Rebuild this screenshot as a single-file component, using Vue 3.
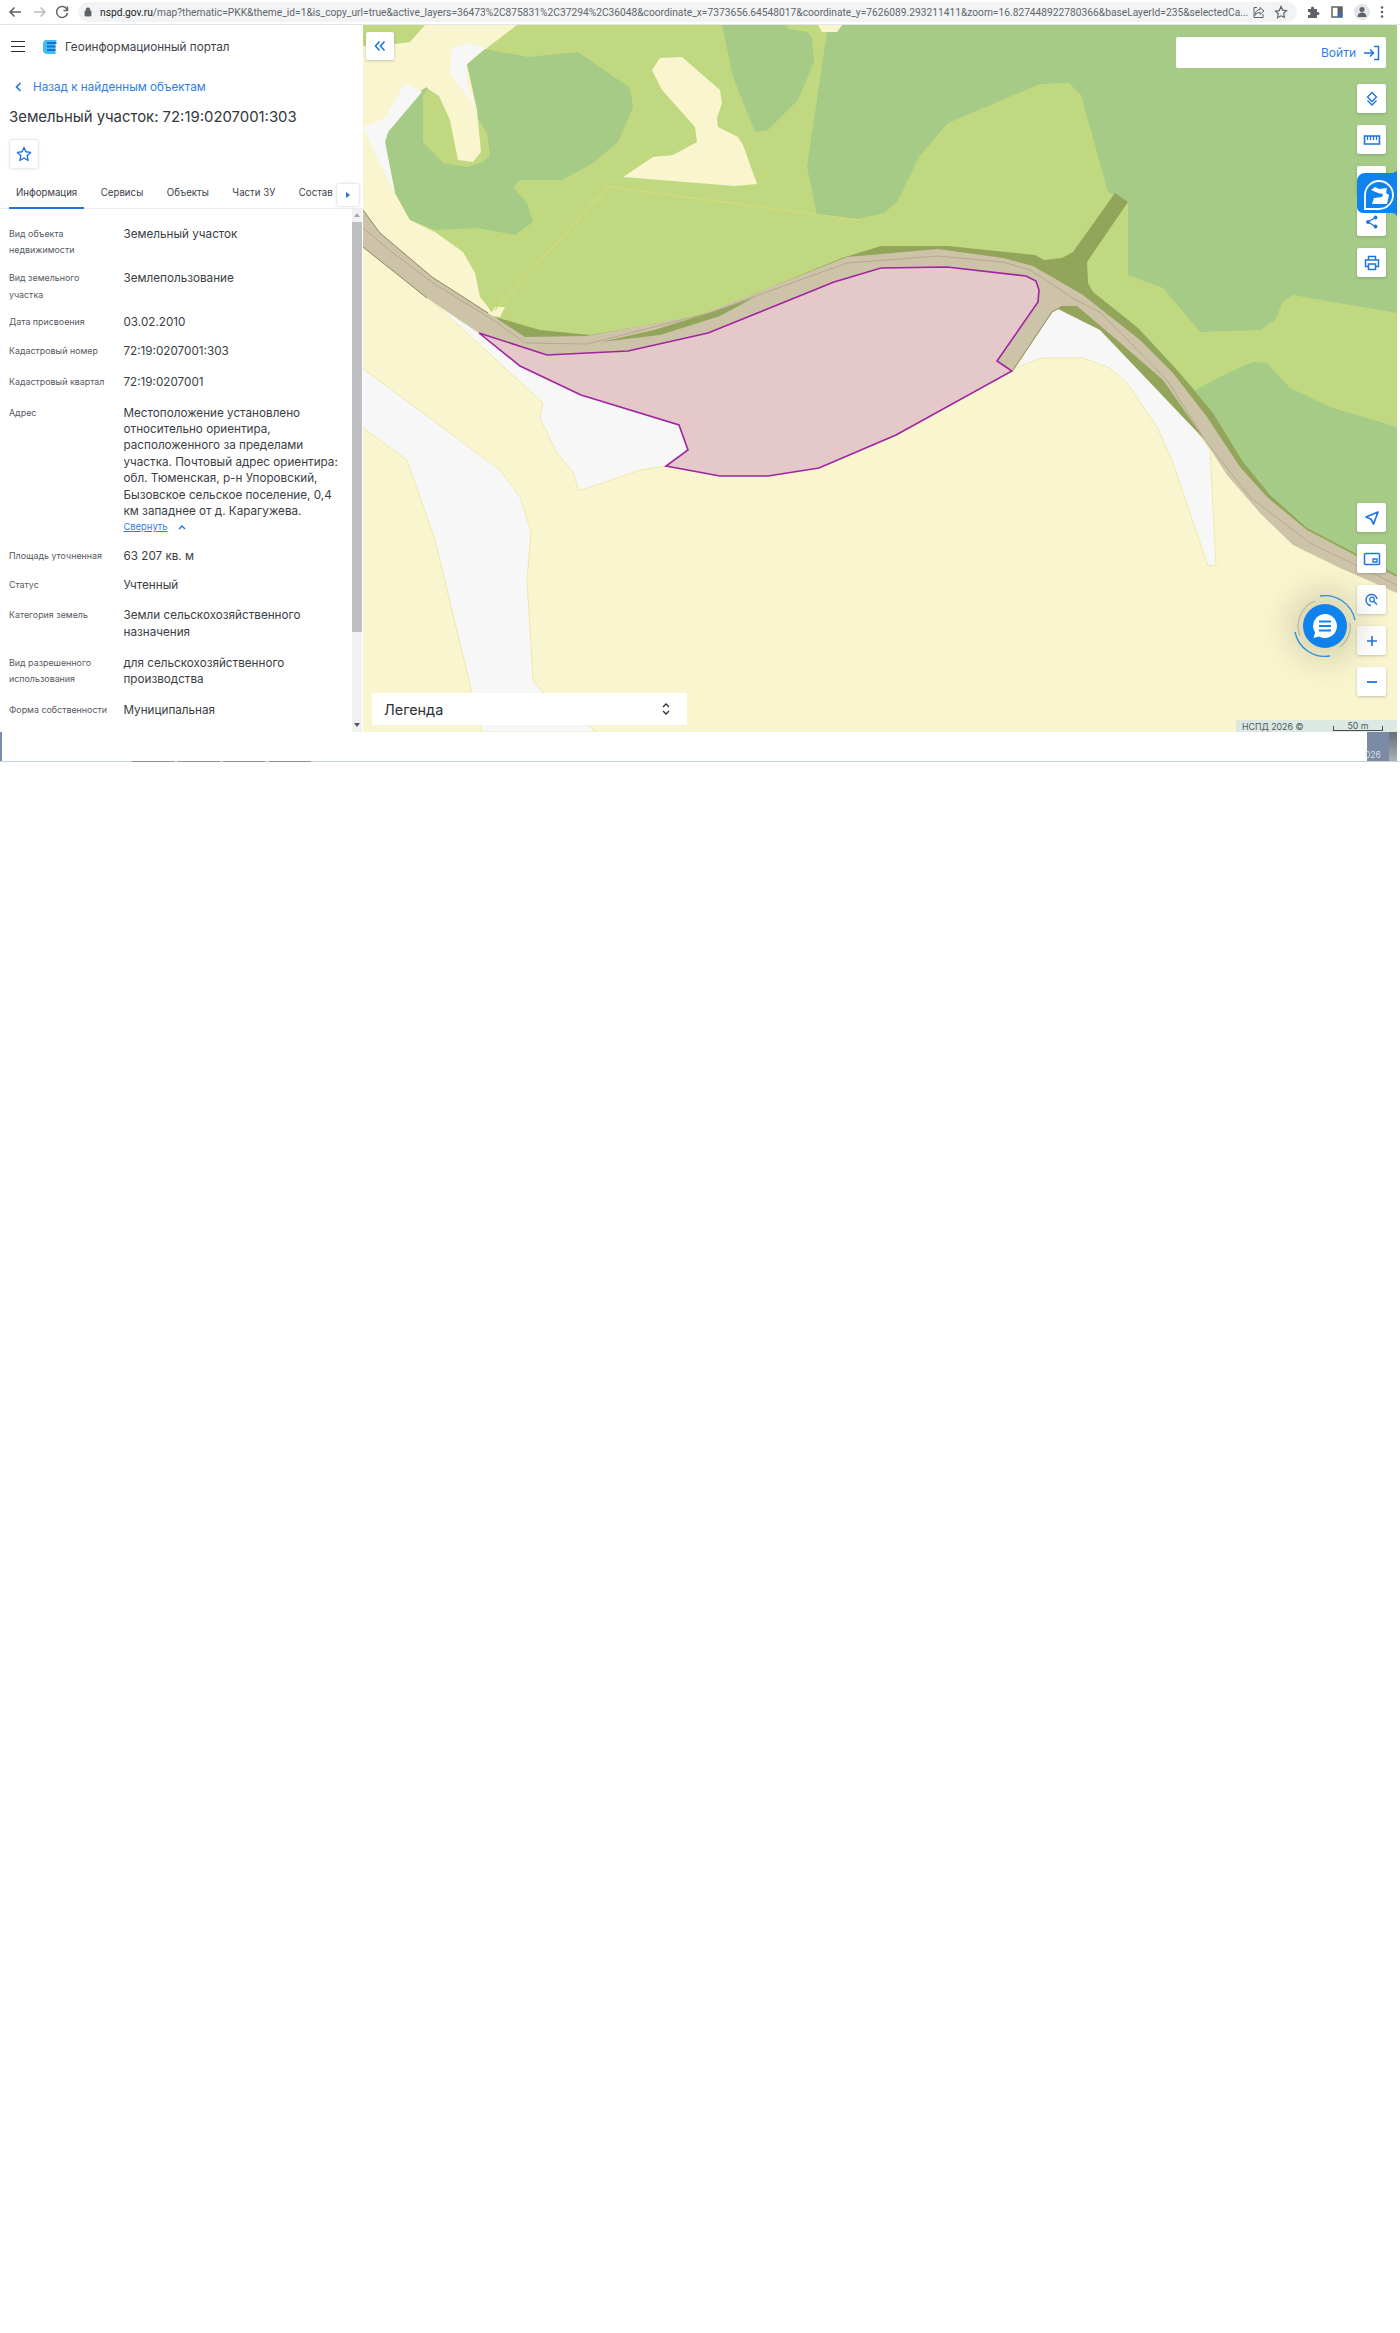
<script setup>
const url = 'map?thematic=PKK&theme_id=1&is_copy_url=true&active_layers=36473%2C875831%2C37294%2C36048&coordinate_x=7373656.64548017&coordinate_y=7626089.293211411&zoom=16.827448922780366&baseLayerId=235&selectedCa...'

const tabs = ['Информация', 'Сервисы', 'Объекты', 'Части ЗУ', 'Состав']

const rows = [
  { label: 'Вид объекта недвижимости', value: 'Земельный участок', pad: 'tall' },
  { label: 'Вид земельного участка', value: 'Землепользование', pad: 'tall' },
  { label: 'Дата присвоения', value: '03.02.2010' },
  { label: 'Кадастровый номер', value: '72:19:0207001:303', pad: 'loose' },
  { label: 'Кадастровый квартал', value: '72:19:0207001', pad: 'loose' },
  {
    label: 'Адрес',
    value: 'Местоположение установлено относительно ориентира, расположенного за пределами участка. Почтовый адрес ориентира: обл. Тюменская, р-н Упоровский, Бызовское сельское поселение, 0,4 км западнее от д. Карагужева.',
    more: true,
  },
  { label: 'Площадь уточненная', value: '63 207 кв. м' },
  { label: 'Статус', value: 'Учтенный', pad: 'loose' },
  { label: 'Категория земель', value: 'Земли сельскохозяйственного назначения', pad: 'wide' },
  { label: 'Вид разрешенного использования', value: 'для сельскохозяйственного производства', pad: 'wide' },
  { label: 'Форма собственности', value: 'Муниципальная' },
]

// map shapes, in page pixels (the svg viewBox starts at the map's corner)
const yellow = '#f9f5cf'
const white = '#f7f7f7'
const light = '#c0d880'
const dark = '#a6cb86'

const whites = [
  '427,298 479,333 520,366 581,395 679,425 688,450 666,466 640,470 579,491 573,472 557,453 540,418 543,403 431,300',
  '362,368 500,470 520,497 531,532 527,580 533,680 543,693 597,732 482,732 472,693 435,540 407,460 362,427',
  '1052,312 1063,306 1077,306 1117,340 1163,380 1210,450 1216,565 1208,566 1173,463 1157,427 1127,383 1110,368 1083,358 1042,358 1015,368',
]

const upperWhites = [
  '452,48 468,43 485,48 466,65 467,85 476,108 450,73',
  '405,83 422,92 388,132 385,142 395,193 383,170 363,127 385,118',
]

const fields = [
  { fill: dark, points: '780,25 1397,25 1397,583 1300,535 1240,470 1190,410 1140,350 1090,300 1000,270 780,270' },
  { fill: light, points: '517,25 828,25 807,167 817,215 857,219 884,213 897,202 919,157 948,123 1040,84 1069,83 1081,95 1108,192 1128,202 1128,275 1163,288 1200,332 1260,330 1275,320 1283,302 1293,295 1397,313 1397,427 1333,408 1290,388 1267,363 1253,362 1230,372 1195,390 1177,370 1138,328 1093,292 1044,260 948,250 847,260 700,318 590,336 550,335 495,318 488,307 480,297 475,273 463,252 435,232 410,220 395,193 385,142 388,132 422,90 466,65 487,48' },
  { fill: light, points: '363,25 425,25 410,42 395,44 363,46' },
  { fill: dark, points: '485,49 528,57 578,52 630,88 633,107 618,142 593,163 562,180 520,180 513,187 527,203 533,222 515,235 477,228 435,230 410,220 395,193 385,142 388,132 422,90 466,65' },
  { fill: dark, points: '722,25 787,25 788,29 808,32 812,38 814,62 798,100 768,130 755,132 733,77' },
  { fill: light, points: '423,95 428,89 439,96 450,115 477,117 487,133 490,155 483,162 468,167 443,163 423,142' },
  { fill: yellow, points: '410,60 466,60 477,110 481,152 473,162 458,160 450,120 439,96 428,89' },
  { fill: yellow, points: '652,70 660,58 682,57 720,90 722,103 717,118 718,127 738,137 743,145 757,184 735,186 623,177 653,157 673,155 697,142 695,127 662,90' },
  { fill: yellow, points: '818,25 822,32 837,32 842,25' },
  { fill: yellow, points: '495,307 505,307 500,317 490,315' },
]

const olive = '495,317 540,330 590,335 700,316 842,258 881,246 948,246 1035,255 1044,260 1062,258 1073,252 1115,193 1128,202 1087,262 1088,283 1093,292 1138,328 1177,370 1213,413 1243,462 1270,495 1307,528 1397,575 1397,590 1300,540 1100,330 1000,280 800,300 600,345 525,345'
const road = '363,210 380,233 432,277 488,313 525,337 587,336 700,315 847,257 938,249 1003,258 1033,266 1083,295 1140,340 1173,373 1207,417 1240,467 1267,497 1307,530 1397,577 1397,593 1340,568 1293,545 1260,513 1227,475 1200,433 1163,380 1117,340 1077,306 1063,306 1052,312 1013,370 997,361 900,300 628,351 547,355 479,333 427,298 363,247'
const sliver = '601,342 654,330 709,313 755,297 720,316 660,335'
const roadLine = '363,228 393,253 433,283 493,320 525,343 587,344 709,313 847,263 938,256 1003,262 1030,270 1076,300 1100,312 1167,380 1207,443 1250,497 1310,543 1397,585'
const roadEdges = [
  '363,210 380,233 432,277 488,313',
  '363,247 427,298',
  '1013,370 1052,312 1063,306',
]
const parcel = '479,333 547,355 628,351 708,333 834,282 881,268 947,267 1026,276 1036,281 1039,290 1038,302 997,361 1012,371 896,435 819,468 768,476 720,476 666,466 688,450 679,425 581,395 520,366'
</script>

<template>
  <div class="page">
    <div class="chrome">
      <svg class="nav" width="72" height="24" viewBox="0 0 72 24" fill="none">
        <path d="M20 12H9M13.5 7.5 9 12l4.500 4.500" stroke="#5f6368" stroke-width="1.500" />
        <path d="M33 12h11M39.500 7.500 44 12l-4.500 4.500" stroke="#b9bcc0" stroke-width="1.500" />
        <path d="M66 9.500A5.500 5.500 0 1 0 66.500 13M66.500 6.500v4h-4" stroke="#5f6368" stroke-width="1.500" />
      </svg>
      <div class="omnibox">
        <svg width="8" height="10" viewBox="0 0 8 10"><path d="M1 4h6v5H1zM2.200 4V2.600a1.800 1.800 0 0 1 3.600 0V4" fill="#5f6368" stroke="#5f6368" stroke-width=".8" /></svg>
        <div class="url"><b>nspd.gov.ru</b>/{{ url }}</div>
        <svg width="14" height="14" viewBox="0 0 14 14" fill="none"><path d="M8 2.500 12 6 8 9.500V7.500C5.500 7.500 4 8.500 3 10.500 3 7 5 4.700 8 4.500zM5 2.500H2v10h9V9" stroke="#5f6368" /></svg>
        <svg width="14" height="14" viewBox="0 0 14 14" fill="none"><path d="m7 1.500 1.700 3.600 3.800.5-2.800 2.700.7 3.900L7 10.800l-3.400 1.900.7-3.900L1.500 6.100l3.800-.5z" stroke="#5f6368" stroke-width="1.200" /></svg>
      </div>
      <div class="chrome-icons">
        <svg width="14" height="14" viewBox="0 0 14 14"><path d="M2 4h3V3a1.500 1.500 0 0 1 3 0v1h3v3h1a1.500 1.500 0 0 1 0 3h-1v3H2v-3h1a1.500 1.500 0 0 0 0-3H2z" fill="#5f6368" /></svg>
        <svg width="14" height="14" viewBox="0 0 14 14" fill="none"><path d="M2 2h10v10H2z" stroke="#5f6368" stroke-width="1.500" /><path d="M7.500 2H12v10H7.500z" fill="#5f6368" /><circle cx="10.500" cy="10.500" r="2" fill="#1a73e8" /></svg>
        <span class="avatar"><svg width="14" height="14" viewBox="0 0 14 14"><circle cx="7" cy="4.500" r="2.500" fill="#5f6368" /><path d="M2.500 12c0-3 2-4.500 4.500-4.500s4.500 1.500 4.500 4.500z" fill="#5f6368" /></svg></span>
        <svg width="4" height="14" viewBox="0 0 4 14"><circle cx="2" cy="2.500" r="1.300" fill="#5f6368" /><circle cx="2" cy="7" r="1.300" fill="#5f6368" /><circle cx="2" cy="11.500" r="1.300" fill="#5f6368" /></svg>
      </div>
    </div>

    <div class="workspace">
      <aside class="side">
        <div class="brand">
          <span class="burger"><i></i><i></i><i></i></span>
          <svg width="16" height="16" viewBox="0 0 16 16">
            <path d="M4 1h11c-1 1-1.500 2-1.500 3v11H5C2.500 15 1 13.500 1 11V5c0-2 1-4 3-4z" fill="#45bdf0" />
            <path d="M5 4h9.500M5 7.500h8.500M5 11h8.500" stroke="#1a6fd8" stroke-width="1.800" />
          </svg>
          <span class="brand-name">Геоинформационный портал</span>
        </div>
        <a class="back">
          <svg width="7" height="10" viewBox="0 0 7 10" fill="none"><path d="M5.500 1 1.500 5l4 4" stroke="#1f74e0" stroke-width="1.600" /></svg>
          Назад к найденным объектам
        </a>
        <h1 class="title">Земельный участок: 72:19:0207001:303</h1>
        <button class="star">
          <svg width="16" height="16" viewBox="0 0 16 16" fill="none"><path d="m8 1.500 2 4.300 4.600.6-3.400 3.200.9 4.700L8 12l-4.100 2.300.9-4.700L1.400 6.400 6 5.800z" stroke="#1f74e0" stroke-width="1.400" stroke-linejoin="round" /></svg>
        </button>
        <div class="tabs">
          <span v-for="(t, i) in tabs" :key="t" class="tab" :class="{ active: i === 0 }">{{ t }}</span>
          <span class="tab-next"><i></i></span>
        </div>
        <div class="panel">
          <div class="rows">
            <div v-for="r in rows" :key="r.label" class="row" :class="r.pad">
              <div class="label">{{ r.label }}</div>
              <div class="value">
                {{ r.value }}
                <a v-if="r.more" class="more">
                  <u>Свернуть</u>
                  <svg width="8" height="6" viewBox="0 0 8 6" fill="none"><path d="M1 5 4 2l3 3" stroke="#1f74e0" stroke-width="1.400" /></svg>
                </a>
              </div>
            </div>
          </div>
          <div class="scrollbar">
            <i class="arrow up"></i>
            <div class="thumb"></div>
            <div class="track"></div>
            <i class="arrow down"></i>
          </div>
        </div>
      </aside>

      <main class="map">
        <svg class="map-art" width="1034" height="707" viewBox="363 25 1034 707">
          <rect x="363" y="25" width="1034" height="707" :fill="yellow" />
          <polygon v-for="p in whites" :key="p" :points="p" :fill="white" stroke="#efe9ae" />
          <polygon v-for="f in fields" :key="f.points" :points="f.points" :fill="f.fill" />
          <polygon v-for="p in upperWhites" :key="p" :points="p" :fill="white" />
          <polyline points="495,310 608,187 860,220" fill="none" stroke="#d6d97c" stroke-width="1.200" />
          <polygon :points="olive" fill="#93a55b" />
          <polygon :points="road" fill="#cdc3a8" />
          <polygon :points="sliver" fill="#93a55b" />
          <polyline :points="roadLine" fill="none" stroke="#b5aa90" />
          <polyline v-for="p in roadEdges" :key="p" :points="p" fill="none" stroke="#8c875a" />
          <polygon :points="parcel" fill="#e5c8ca" stroke="#a024a0" stroke-width="1.600" />
        </svg>

        <button class="ctl collapse">
          <svg width="14" height="14" viewBox="0 0 14 14" fill="none"><path d="M6.500 2.500 2.500 7l4 4.500M11.500 2.500 7.500 7l4 4.500" stroke="#1f74e0" stroke-width="1.600" /></svg>
        </button>

        <div class="login">
          <span>Войти</span>
          <svg width="17" height="16" viewBox="0 0 17 16" fill="none"><path d="M1 8h9M7 4.500 10.500 8 7 11.500M11 1.500h4.500v13H11" stroke="#1f74e0" stroke-width="1.500" /></svg>
        </div>

        <div class="tools top">
          <button class="ctl">
            <svg width="16" height="16" viewBox="0 0 16 16" fill="none"><path d="M8 1.500 12.500 6 8 10.500 3.500 6zM3.500 9.500 8 14l4.500-4.500" stroke="#1f74e0" stroke-width="1.400" /></svg>
          </button>
          <button class="ctl">
            <svg width="18" height="14" viewBox="0 0 18 14" fill="none"><path d="M1.500 3h15v8h-15z" stroke="#1f74e0" stroke-width="1.600" /><path d="M4.500 3v4M7.500 3v4M10.500 3v4M13.500 3v4" stroke="#1f74e0" stroke-width="1.300" /></svg>
          </button>
          <button class="ctl"></button>
          <button class="ctl">
            <svg width="16" height="16" viewBox="0 0 16 16" fill="none"><path d="M11.500 3.500 4 8l7.500 4.500" stroke="#1f74e0" stroke-width="1.300" /><circle cx="11.500" cy="3.500" r="1.900" fill="#1f74e0" /><circle cx="4" cy="8" r="1.900" fill="#1f74e0" /><circle cx="11.500" cy="12.500" r="1.900" fill="#1f74e0" /></svg>
          </button>
          <button class="ctl">
            <svg width="16" height="16" viewBox="0 0 16 16" fill="none"><path d="M4.500 5V1.500h7V5M4.500 11.500h-3V5h13v6.500h-3M4.500 9h7v5.500h-7z" stroke="#1f74e0" stroke-width="1.500" /></svg>
          </button>
        </div>

        <svg class="help-tab" width="43" height="58" viewBox="0 0 43 58">
          <path d="M43 0C41 5 39 8 35 8H8a8 8 0 0 0-8 8V42a6 6 0 0 0 6 6H35C39 48 41 52 43 58z" fill="#0f82ee" />
          <path d="M22 16a14 14 0 1 1 0 28H8V30a14 14 0 0 1 14-14z" fill="none" stroke="#fff" stroke-width="1.800" />
          <path d="M14 25l4-3 4 2 8-1-1 5 3 2-2 9H14l3-6 8-1 1-3-5-1z" fill="#fff" />
          <path d="M16 34l-2 6h14" fill="none" stroke="#0f82ee" stroke-width="1.200" />
        </svg>

        <div class="tools bottom">
          <button class="ctl">
            <svg width="16" height="16" viewBox="0 0 16 16" fill="none"><path d="M14 2 2 7l5 2.200L9.500 14z" stroke="#1f74e0" stroke-width="1.700" stroke-linejoin="round" /></svg>
          </button>
          <button class="ctl">
            <svg width="18" height="14" viewBox="0 0 18 14" fill="none"><rect x="1.500" y="1.500" width="15" height="11" rx="1" stroke="#1f74e0" stroke-width="1.500" /><path d="M10 7h4v3h-4z" stroke="#1f74e0" stroke-width="1.300" /></svg>
          </button>
          <button class="ctl">
            <svg width="14" height="14" viewBox="0 0 14 14" fill="none"><path d="M6 12.500A5.500 5.500 0 1 1 12 6" stroke="#1f74e0" stroke-width="1.500" /><circle cx="7" cy="6.500" r="2.300" stroke="#1f74e0" stroke-width="1.300" /><path d="m9 8.500 3 3" stroke="#1f74e0" stroke-width="1.500" /></svg>
          </button>
          <button class="ctl">
            <svg width="14" height="14" viewBox="0 0 14 14" fill="none"><path d="M7 2v10M2 7h10" stroke="#1f74e0" stroke-width="1.600" /></svg>
          </button>
          <button class="ctl">
            <svg width="14" height="14" viewBox="0 0 14 14" fill="none"><path d="M2 7h10" stroke="#1f74e0" stroke-width="1.800" /></svg>
          </button>
        </div>

        <div class="fab">
          <span class="fab-core">
            <svg width="26" height="26" viewBox="0 0 26 26">
              <path d="M13 1a12 12 0 1 1-6 22.400L1.500 25l1.600-5.500A12 12 0 0 1 13 1z" fill="#fff" />
              <path d="M7 8.500h12M7 13h12M7 17.500h12" stroke="#0f82ee" stroke-width="2" />
            </svg>
          </span>
          <svg class="rings" width="76" height="76" viewBox="-38 -38 76 76" fill="none">
            <path d="M-5-30A30.500 30.500 0 0 1 30-6" stroke="#2a8fe0" stroke-width="1.300" />
            <path d="M-30 6A30.500 30.500 0 0 0 5 30" stroke="#2a8fe0" stroke-width="1.300" />
            <path d="M-25 10A27 27 0 0 1-10-25" stroke="#b9b9a0" stroke-width="1.300" />
            <path d="M25-3A26 26 0 0 1 15 21" stroke="#b9b9a0" stroke-width="1.300" />
          </svg>
        </div>

        <div class="legend">
          <span>Легенда</span>
          <svg width="8" height="14" viewBox="0 0 8 14" fill="none"><path d="M1 5 4 2l3 3M1 9l3 3 3-3" stroke="#2b2f36" stroke-width="1.300" /></svg>
        </div>

        <div class="attr">
          <span>НСПД 2026 ©</span>
          <span class="scale">50 m</span>
        </div>
      </main>
    </div>

    <div class="strip">
      <i class="strip-left"></i>
      <div class="strip-ticks"><i></i><i></i><i></i><i></i></div>
      <div class="strip-thumb"><span>026</span><i></i></div>
    </div>
  </div>
</template>

<style scoped>
.page {
  width: 1400px;
  height: 2333px;
  background: #fff;
  font-family: Inter, "Noto Sans", sans-serif;
  color: #33373d;
  overflow: hidden;
}

.chrome {
  height: 25px;
  display: flex;
  align-items: center;
  border-bottom: 1px solid #e3e5e8;
  box-sizing: border-box;
}

.nav {
  margin-left: 1px;
  flex: none;
  width: 72px;
}

.omnibox {
  margin-left: 5px;
  width: 1219px;
  height: 20px;
  box-sizing: border-box;
  padding: 0 7px 0 6px;
  border-radius: 10px;
  background: #f1f3f4;
  display: flex;
  align-items: center;
  gap: 8px;
}

.url {
  width: 1144px;
  font-family: Roboto, sans-serif;
  font-size: 10.230px;
  color: #63676c;
  white-space: nowrap;
}

.url b {
  font-weight: 400;
  color: #202124;
}

.chrome-icons {
  display: flex;
  align-items: center;
  gap: 10px;
  margin-left: 9px;
}

.avatar {
  width: 16px;
  height: 16px;
  border-radius: 50%;
  background: #e2e5e9;
  display: flex;
  align-items: center;
  justify-content: center;
}

.workspace {
  height: 707px;
  display: flex;
}

.side {
  width: 363px;
  flex: none;
  display: flex;
  flex-direction: column;
  background: #fff;
}

.brand {
  display: flex;
  align-items: center;
  padding: 13px 0 0 11px;
  height: 17px;
}

.burger {
  width: 14px;
  display: flex;
  flex-direction: column;
  gap: 3.200px;
  margin-right: 17px;
}

.burger i {
  height: 1.800px;
  background: #2b2f36;
}

.brand-name {
  margin-left: 7px;
  font-size: 11.700px;
  color: #40444a;
}

.back {
  margin: 24px 0 0 15px;
  display: flex;
  align-items: center;
  gap: 11px;
  font-size: 11.700px;
  line-height: 16px;
  color: #2f7de6;
}

.title {
  margin: 10px 0 0 9px;
  font-size: 14.900px;
  line-height: 24px;
  font-weight: 400;
  color: #33373d;
}

.star {
  margin: 11px 0 0 10px;
  width: 28px;
  height: 28px;
  padding: 0;
  border: 0;
  background: #fff;
  box-shadow: 0 0 3px rgba(40, 70, 110, 0.3);
  border-radius: 2px;
  display: flex;
  align-items: center;
  justify-content: center;
}

.tabs {
  position: relative;
  margin-top: 12px;
  height: 29px;
  box-sizing: border-box;
  padding-left: 9px;
  display: flex;
  gap: 9.500px;
  border-bottom: 1px solid #eceef0;
}

.tab {
  padding: 0 7px;
  font-size: 9.700px;
  line-height: 26px;
  height: 28.500px;
  box-sizing: border-box;
  color: #3c4046;
  white-space: nowrap;
}

.tab.active {
  border-bottom: 2.500px solid #1f74e0;
}

.tab-next {
  position: absolute;
  left: 337px;
  top: 4px;
  width: 22px;
  height: 22px;
  background: #fff;
  box-shadow: 0 0 3px rgba(40, 70, 110, 0.3);
  border-radius: 2px;
  display: flex;
  align-items: center;
  justify-content: center;
}

.tab-next i {
  border-left: 4px solid #1f74e0;
  border-top: 3.500px solid transparent;
  border-bottom: 3.500px solid transparent;
}

.panel {
  flex: 1;
  min-height: 0;
  display: flex;
  overflow: hidden;
}

.rows {
  width: 352px;
  flex: none;
  padding-top: 17px;
  box-sizing: border-box;
  overflow: hidden;
}

.row {
  display: grid;
  grid-template-columns: 114.500px 224px;
  padding: 0 0 12.700px 9px;
}

.row.tall {
  padding-bottom: 11.300px;
}

.row.loose {
  padding-bottom: 14.200px;
}

.row.wide {
  padding-bottom: 14.800px;
}

.label {
  max-width: 105px;
  font-size: 8.900px;
  line-height: 16.400px;
  color: #55595f;
}

.value {
  font-size: 11.700px;
  line-height: 16.400px;
  color: #3a3e44;
}

.more {
  display: flex;
  align-items: center;
  gap: 10px;
  height: 15.500px;
  font-size: 9.400px;
  color: #2f7de6;
}

.scrollbar {
  width: 10px;
  flex: none;
  display: flex;
  flex-direction: column;
  background: #f1f1f1;
}

.thumb {
  height: 410px;
  background: #bdbfc2;
}

.track {
  flex: 1;
}

.arrow {
  height: 13px;
  flex: none;
  display: block;
  position: relative;
}

.arrow::after {
  content: "";
  position: absolute;
  left: 2px;
  top: 4px;
  border-left: 3px solid transparent;
  border-right: 3px solid transparent;
}

.arrow.up::after {
  border-bottom: 4px solid #a8a8a8;
}

.arrow.down::after {
  border-top: 4px solid #555;
}

.map {
  position: relative;
  width: 1034px;
  flex: none;
  overflow: hidden;
}

.map-art {
  position: absolute;
  inset: 0;
  display: block;
}

.ctl {
  width: 29px;
  height: 29px;
  padding: 0;
  border: 0;
  background: #fff;
  border-radius: 2px;
  box-shadow: 0 1px 3px rgba(40, 60, 80, 0.25);
  display: flex;
  align-items: center;
  justify-content: center;
}

.collapse {
  position: absolute;
  left: 3px;
  top: 7px;
  width: 28px;
  height: 28px;
}

.login {
  position: absolute;
  left: 813px;
  top: 12px;
  width: 210px;
  height: 31px;
  box-sizing: border-box;
  padding-right: 6px;
  background: #fff;
  border-radius: 2px;
  display: flex;
  align-items: center;
  justify-content: flex-end;
  gap: 7px;
  font-size: 12px;
  color: #2f7de6;
}

.tools {
  position: absolute;
  left: 994px;
  display: flex;
  flex-direction: column;
  gap: 12px;
}

.tools.top {
  top: 59px;
}

.tools.bottom {
  top: 478px;
}

.help-tab {
  position: absolute;
  left: 994px;
  top: 140px;
}

.fab {
  position: absolute;
  left: 924px;
  top: 563px;
  width: 76px;
  height: 76px;
  display: flex;
  align-items: center;
  justify-content: center;
}

.rings {
  position: absolute;
  inset: 0;
}

.fab-core {
  width: 44px;
  height: 44px;
  border-radius: 50%;
  background: #0f82ee;
  box-shadow: 0 0 30px 14px rgba(110, 110, 80, 0.24);
  display: flex;
  align-items: center;
  justify-content: center;
}

.legend {
  position: absolute;
  left: 9px;
  top: 668px;
  width: 315px;
  height: 32px;
  box-sizing: border-box;
  padding: 0 17px 0 12px;
  background: #fff;
  border-radius: 2px;
  display: flex;
  align-items: center;
  justify-content: space-between;
  font-size: 14.400px;
  color: #2b2f36;
}

.attr {
  position: absolute;
  right: 0;
  bottom: 0;
  width: 161px;
  height: 12px;
  box-sizing: border-box;
  padding: 0 14px 0 6px;
  background: #dce8e2;
  display: flex;
  align-items: center;
  justify-content: space-between;
  font-size: 8.800px;
  color: #52595f;
}

.scale {
  position: relative;
  width: 50px;
  height: 10px;
  line-height: 9px;
  text-align: center;
  border-bottom: 1px solid #4a4f55;
  box-sizing: border-box;
}

.scale::before,
.scale::after {
  content: "";
  position: absolute;
  bottom: 0;
  width: 1px;
  height: 4px;
  background: #4a4f55;
}

.scale::before {
  left: 0;
}

.scale::after {
  right: 0;
}

.strip {
  position: relative;
  height: 30px;
  box-sizing: border-box;
  border-bottom: 1px solid #c6d3de;
}

.strip-left {
  position: absolute;
  left: 0;
  top: 0;
  bottom: 0;
  width: 2px;
  background: #7a8fb0;
}

.strip-ticks {
  position: absolute;
  left: 132px;
  bottom: -1px;
  display: flex;
  gap: 3.500px;
}

.strip-ticks i {
  width: 42px;
  height: 1px;
  background: #8c8f92;
}

.strip-thumb {
  position: absolute;
  left: 1367px;
  top: 0;
  bottom: 0;
  width: 30px;
  background: #7b8ba5;
  display: flex;
  align-items: flex-end;
  justify-content: space-between;
  font-size: 8.500px;
  color: #d9dee6;
}

.strip-thumb span {
  margin-left: -2px;
  line-height: 12px;
}

.strip-thumb i {
  width: 8px;
  height: 100%;
  background: linear-gradient(#666e78, #a9afb6);
}
</style>
